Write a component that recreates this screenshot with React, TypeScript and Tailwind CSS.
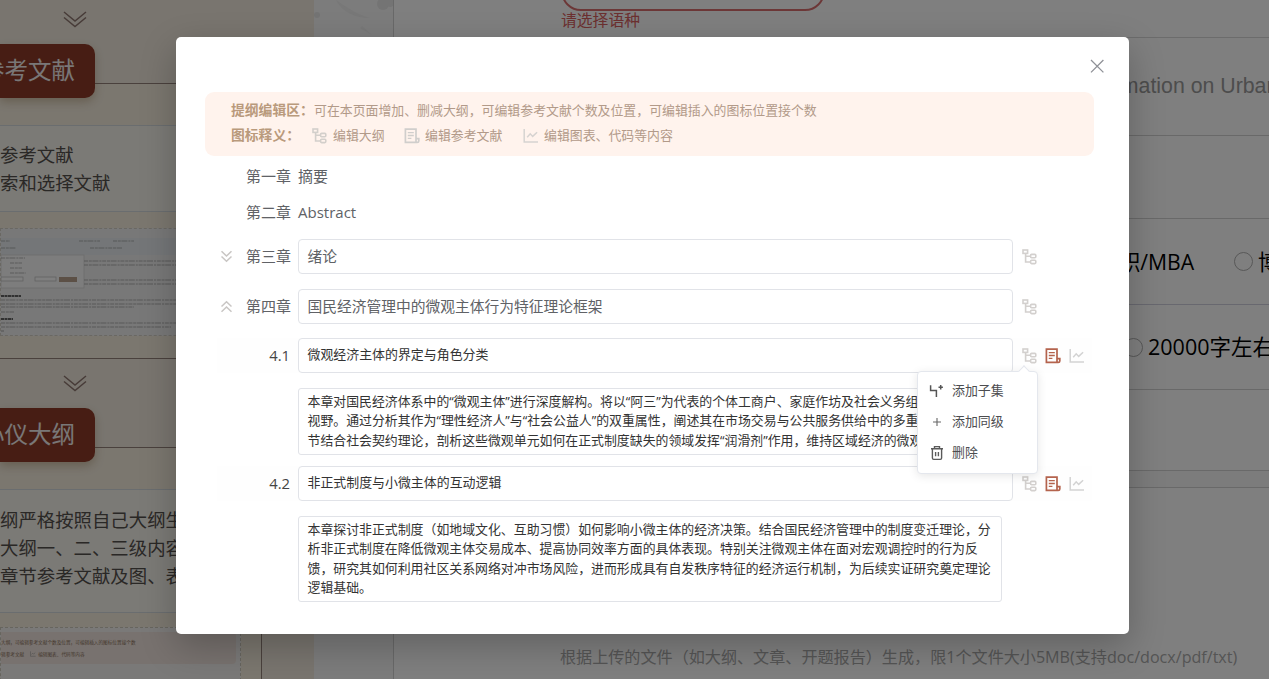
import React from "react";

const SANS = "font-['Open_Sans','Noto_Sans_CJK_SC',sans-serif]";

function DoubleChevron({ up = false, className = "" }: { up?: boolean; className?: string }) {
  return (
    <svg viewBox="0 0 12 12" className={className} fill="none" stroke="currentColor" strokeWidth="1.4">
      {up ? <path d="M1.4 6 6 1.6 10.6 6M1.4 10.8 6 6.4l4.6 4.4" /> : <path d="M1.4 1.2 6 5.6l4.6-4.4M1.4 6 6 10.4 10.6 6" />}
    </svg>
  );
}

function TreeIcon({ className = "text-[#d3d0ce]" }: { className?: string }) {
  return (
    <svg viewBox="0 0 15 16" className={"h-4 w-[15px] shrink-0 " + className} fill="none" stroke="currentColor" strokeWidth="1.6">
      <rect x="1" y="1" width="4.6" height="3.4" />
      <path d="M3.6 4.6v8.4h4.6M3.6 7.2h4.6" />
      <rect x="8.6" y="5.4" width="5.2" height="3.4" rx="1" />
      <rect x="8.6" y="11.2" width="5.2" height="3.4" rx="1" />
    </svg>
  );
}

function DocIcon({ className = "text-[#b4634d]" }: { className?: string }) {
  return (
    <svg viewBox="0 0 16 16" className={"h-4 w-4 shrink-0 " + className} fill="none" stroke="currentColor" strokeWidth="1.7">
      <path d="M12 10.4V1.2H1.4v13.2h11.8c1 0 1.6-.6 1.6-1.5v-2.3H12v3.6" />
      <path d="M3.8 4.6h6M3.8 7.5h6M3.8 10.4h3.6" strokeWidth="1.4" />
    </svg>
  );
}

function ChartIcon({ className = "text-[#d3d3d3]" }: { className?: string }) {
  return (
    <svg viewBox="0 0 16 16" className={"h-4 w-4 shrink-0 " + className} fill="none" stroke="currentColor" strokeWidth="1.5">
      <path d="M1.2 1v13H15M4.2 9.2l3-3.4 2.5 2.6 4.4-4.2" />
    </svg>
  );
}

function Squiggles({ rows }: { rows: [number, number, number][] }) {
  return (
    <>
      {rows.map(([x, y, w], i) => (
        <path key={i} d={`M${x} ${y}h${w}`} stroke="#888" strokeWidth="1.2" strokeDasharray="4 .8 3 .6 6 1 2 .8" opacity=".6" />
      ))}
    </>
  );
}

function ListPreview() {
  return (
    <div className="mt-4 h-[108px] w-[241px] border border-dashed border-[#d5d0c6] bg-[#f1f1f1]">
      <svg width="240" height="106" viewBox="0 0 240 106">
        <rect y="9" width="240" height="17" fill="#e9edf0" />
        <rect y="26" width="83" height="33" fill="#fbfbfb" stroke="#ddd" />
        <Squiggles
          rows={[
            [0, 12, 9], [78, 12, 21], [112, 12, 21], [0, 19, 15], [89, 19, 32], [0, 29, 24], [9, 34, 12], [9, 39, 12],
            [9, 44, 16], [83, 32, 100], [83, 36, 120], [83, 51, 130], [83, 55, 110], [0, 71, 180], [0, 75, 200],
            [0, 78, 133], [0, 83, 13], [0, 94, 210], [0, 98, 170], [0, 102, 3],
          ]}
        />
        <path d="M0 67h20M0 90h12" stroke="#333" strokeWidth="1.6" strokeDasharray="3 .5" />
        <rect y="48" width="22" height="4" fill="#fff" stroke="#bbb" strokeWidth=".7" />
        <rect x="34" y="48" width="21" height="4" fill="#fff" stroke="#bbb" strokeWidth=".7" />
        <rect x="58" y="48" width="18" height="5" fill="#b9a08c" />
      </svg>
    </div>
  );
}

function StepTitle({ children }: { children: string }) {
  return (
    <div className="-mt-[40px] flex h-[54px] w-[95px] items-center justify-end rounded-r-[10px] bg-[#8e3b28] pr-5 text-[23.5px] whitespace-nowrap text-[#f3eeee] shadow-[0_4px_10px_rgba(120,80,30,.3)]">
      {children}
    </div>
  );
}

function GuidePanel() {
  return (
    <aside className="flex h-full w-[314px] shrink-0 flex-col overflow-hidden bg-[#f2ebdf]">
      <div className="flex h-[83px] shrink-0 pt-[11px] pl-[63px]">
        <svg width="24" height="17" viewBox="0 0 24 17" fill="none" stroke="#8f7770" strokeWidth="1.5">
          <path d="M1 1l11 9L23 1M1 6.5l11 9 11-9" />
        </svg>
      </div>
      <section className="h-[276px] w-[262px] shrink-0 border-t border-r border-b border-[#95827a] bg-[#f6eedf]">
        <StepTitle>参考文献</StepTitle>
        <div className="mt-[27px] h-[87px] w-[241px] border-y border-[#d5dade] bg-[#f6f4ed] pt-[15px] text-[18.4px] leading-[28px] whitespace-nowrap text-[#55504c]">
          <p>参考文献</p>
          <p>索和选择文献</p>
        </div>
        <ListPreview />
      </section>
      <div className="flex h-[88px] shrink-0 pt-4 pl-[63px]">
        <svg width="24" height="17" viewBox="0 0 24 17" fill="none" stroke="#8f7770" strokeWidth="1.5">
          <path d="M1 1l11 9L23 1M1 6.5l11 9 11-9" />
        </svg>
      </div>
      <section className="h-[260px] w-[262px] shrink-0 border-t border-r border-[#95827a] bg-[#f6eedf]">
        <StepTitle>心仪大纲</StepTitle>
        <div className="mt-[27px] h-[124px] w-[241px] border-y border-[#d5dade] bg-[#f6f4ed] pt-[16px] text-[18.4px] leading-[28px] whitespace-nowrap text-[#55504c]">
          <p>纲严格按照自己大纲生成</p>
          <p>大纲一、二、三级内容，</p>
          <p>章节参考文献及图、表等</p>
        </div>
        <div className="mt-[14px] h-[80px] w-[241px] rounded-tr border border-dashed border-[#cfcabc] bg-[#f4f3f1] pt-[4px]">
          <div className="h-[32px] w-[235px] rounded-r-sm bg-[#f1e5de] pt-[4px] text-[4.65px] whitespace-nowrap text-[#8a715c]">
            <p className="leading-[12px]">大纲，可编辑参考文献个数及位置，可编辑插入的图标位置接个数</p>
            <p className="flex items-center leading-[12px]">
              辑参考文献
              <ChartIcon className="mr-0.5 ml-1.5 h-[6px]! w-[6px]! text-[#999]" />
              编辑图表、代码等内容
            </p>
          </div>
        </div>
      </section>
    </aside>
  );
}

function RequestForm() {
  return (
    <main className="flex h-full flex-1 flex-col overflow-hidden border-l border-[#d2d2d2]">
      <div className="h-[38px] shrink-0 border-b border-[#d9d9d9] pl-[167px]">
        <div className="-mt-[29px] h-10 w-[264px] rounded-[20px] border-2 border-[#d96f6f]" />
        <p className="-mt-px text-[15.8px] leading-[20px] text-[#d96161]">请选择语种</p>
      </div>
      <div className="flex h-[98px] shrink-0 items-center border-b border-[#d2d2d2] pl-[702px] font-['Liberation_Sans'] text-[21.3px] whitespace-nowrap text-[#9a9a9a]">
        <span>formation on Urban</span>
      </div>
      <div className="h-[83px] shrink-0 border-b border-[#d2d2d2]" />
      <div className="flex h-[86px] shrink-0 items-center border-b border-[#d0d0de] pl-[725px] text-[21.2px] whitespace-nowrap text-black">
        <span className="w-[115px] shrink-0">职/MBA</span>
        <span className="mr-[5px] size-[19px] shrink-0 rounded-full border border-[#b0b0b0]" />
        博士
      </div>
      <div className="flex h-[85px] shrink-0 items-center border-b border-[#d2d2d2] pl-[730px] text-[21.5px] whitespace-nowrap text-black">
        <span className="mr-[5px] size-[19px] shrink-0 rounded-full border border-[#b0b0b0]" />
        20000字左右
      </div>
      <div className="h-[81px] shrink-0 border-b border-[#d2d2d2]" />
      <div className="h-[17px] shrink-0 border-b border-[#d2d2d2] bg-[#f8f8f8]" />
      <p className="pt-[157px] pl-[166px] text-[16.1px] leading-[24px] whitespace-nowrap text-[#aaa]">
        根据上传的文件（如大纲、文章、开题报告）生成，限1个文件大小5MB(支持doc/docx/pdf/txt)
      </p>
    </main>
  );
}

function Field({ children, small = false }: { children: string; small?: boolean }) {
  return (
    <div
      className={
        "flex h-[35px] w-[715px] shrink-0 items-center rounded-[4px] border border-[#e1e3e8] bg-white pb-px pl-[8.5px] whitespace-nowrap " +
        (small ? "text-[12.93px] text-[#333]" : "text-[14.75px] text-[#606266]")
      }
    >
      {children}
    </div>
  );
}

function Chapter({ label, title, open = false }: { label: string; title: string; open?: boolean }) {
  return (
    <div className="flex items-center">
      <span className="flex w-[70px] pl-[44px]">
        <DoubleChevron up={open} className="h-[13px] w-[13px] text-[#c9c6c4]" />
      </span>
      <span className="w-[52px] pb-px text-[15px] whitespace-nowrap text-[#606266]">{label}</span>
      <Field>{title}</Field>
      <span className="ml-[9px]">
        <TreeIcon />
      </span>
    </div>
  );
}

function Section({ index, title }: { index: string; title: string }) {
  return (
    <div className="ml-[41px] flex w-[875px] items-center bg-[#fefefe]">
      <span className="w-[81px] pr-[8px] pb-px text-right text-[14.8px] text-[#444]">{index}</span>
      <Field small>{title}</Field>
      <span className="ml-[9px] flex gap-[8px]">
        <TreeIcon />
        <DocIcon />
        <ChartIcon />
      </span>
    </div>
  );
}

function Summary({ lines, className }: { lines: string[]; className: string }) {
  return (
    <div className={"ml-[122px] w-[704px] overflow-hidden rounded-[3px] border border-[#e1e3e8] pl-[8.5px] text-[12.9px] leading-[19.3px] whitespace-pre text-[#333] " + className}>
      {lines.map((line) => (
        <p key={line}>{line}</p>
      ))}
    </div>
  );
}

function ActionMenu() {
  return (
    <div className="absolute top-[334px] left-[741px] flex h-[103px] w-[121px] flex-col rounded-[4px] border border-[#e4e7ed] bg-white pt-[3px] text-[12.93px] text-[#4c4d50] shadow-[0_2px_10px_rgba(0,0,0,.1)]">
      <span className="absolute -top-[5px] left-[102px] size-[8px] rotate-45 border-t border-l border-[#e4e7ed] bg-white" />
      <div className="flex h-[31px] items-center pl-[11px]">
        <svg width="16" height="16" viewBox="0 0 16 16" fill="none" stroke="#555" strokeWidth="1.5">
          <path d="M1.6 2.2v5.2h5.8V14M11.7 2v4.4M9.5 4.2h4.4" />
        </svg>
        <span className="ml-[7px]">添加子集</span>
      </div>
      <div className="flex h-[31px] items-center pl-[11px]">
        <svg width="16" height="16" viewBox="0 0 16 16" fill="none" stroke="#666" strokeWidth="1.1">
          <path d="M8 4v8M4 8h8" />
        </svg>
        <span className="ml-[7px]">添加同级</span>
      </div>
      <div className="flex h-[31px] items-center pl-[11px]">
        <svg width="16" height="16" viewBox="0 0 16 16" fill="none" stroke="#5a5a5a" strokeWidth="1.4">
          <path d="M2 3.8h12M5.5 3.6V1.6h5v2M3.4 4v9c0 .8.5 1.4 1.3 1.4h6.6c.8 0 1.3-.6 1.3-1.4V4M6.6 7v4.3M9.4 7v4.3" />
        </svg>
        <span className="ml-[7px]">删除</span>
      </div>
    </div>
  );
}

function OutlineDialog() {
  return (
    <div className="relative h-[597px] w-[953px] rounded-[5px] bg-white shadow-[0_12px_36px_rgba(0,0,0,.24)]">
      <div className="flex h-[55px] justify-end pt-[22px] pr-[25px]">
        <svg width="14" height="14" viewBox="0 0 14 14" stroke="#8f9197" strokeWidth="1.3">
          <path d="M1 1l12.4 12.4M13.4 1 1 13.4" />
        </svg>
      </div>
      <div className="ml-[29px] h-[64px] w-[889px] rounded-[9px] bg-[#fff3ed] pt-[6px] pl-[26px] text-[12.9px] whitespace-nowrap text-[#b29a89]">
        <p className="flex h-[25px] items-center">
          <b className="w-[83px] shrink-0 text-[13.8px] text-[#b99a7c]">提纲编辑区：</b>
          可在本页面增加、删减大纲，可编辑参考文献个数及位置，可编辑插入的图标位置接个数
        </p>
        <p className="flex h-[25px] items-center">
          <b className="w-[81px] shrink-0 text-[13.8px] text-[#b99a7c]">图标释义：</b>
          <TreeIcon className="text-[#d3cfcb]" />
          <span className="ml-[6px] w-[71px]">编辑大纲</span>
          <DocIcon className="text-[#d0cecc]" />
          <span className="ml-[5px] w-[98px]">编辑参考文献</span>
          <ChartIcon className="text-[#d6d3d1]" />
          <span className="ml-[5px]">编辑图表、代码等内容</span>
        </p>
      </div>
      <div className="mt-[2px] ml-[70px] flex h-[36px] items-center gap-[7px] text-[15px] text-[#606266]">
        <span>第一章</span>
        <span>摘要</span>
      </div>
      <div className="ml-[70px] flex h-[36px] items-center gap-[7px] text-[15px] text-[#606266]">
        <span>第二章</span>
        <span>Abstract</span>
      </div>
      <div className="mt-[9px]">
        <Chapter label="第三章" title="绪论" />
      </div>
      <div className="mt-[15px]">
        <Chapter label="第四章" title="国民经济管理中的微观主体行为特征理论框架" open />
      </div>
      <div className="mt-[14px]">
        <Section index="4.1" title="微观经济主体的界定与角色分类" />
      </div>
      <Summary
        className="mt-[15px] h-[67px] pt-[3px]"
        lines={[
          "本章对国民经济体系中的“微观主体”进行深度解构。将以“阿三”为代表的个体工商户、家庭作坊及社会义务组织纳入研究",
          "视野。通过分析其作为“理性经济人”与“社会公益人”的双重属性，阐述其在市场交易与公共服务供给中的多重角色。本",
          "节结合社会契约理论，剖析这些微观单元如何在正式制度缺失的领域发挥“润滑剂”作用，维持区域经济的微观平衡。",
        ]}
      />
      <div className="mt-[11px]">
        <Section index="4.2" title="非正式制度与小微主体的互动逻辑" />
      </div>
      <Summary
        className="mt-[15px] h-[86px] pt-[3px]"
        lines={[
          "本章探讨非正式制度（如地域文化、互助习惯）如何影响小微主体的经济决策。结合国民经济管理中的制度变迁理论，分",
          "析非正式制度在降低微观主体交易成本、提高协同效率方面的具体表现。特别关注微观主体在面对宏观调控时的行为反",
          "馈，研究其如何利用社区关系网络对冲市场风险，进而形成具有自发秩序特征的经济运行机制，为后续实证研究奠定理论",
          "逻辑基础。",
        ]}
      />
      <ActionMenu />
    </div>
  );
}

export default function App() {
  return (
    <div className={"relative h-[679px] w-[1269px] overflow-hidden bg-white " + SANS}>
      <div className="flex h-full w-full">
        <GuidePanel />
        <div className="w-[79px] shrink-0 bg-[#f8f8f8]">
          <svg width="79" height="60" viewBox="0 0 79 60" fill="#e8e8e8">
            <circle cx="69" cy="4" r="6" />
            <circle cx="76" cy="2" r="5" />
            <circle cx="3" cy="15" r="3" />
            <path d="M22 0c12 8 20 14 34 18-14 0-28-6-34-18zM48 26l10 9-12-7z" opacity=".5" />
          </svg>
        </div>
        <RequestForm />
      </div>
      <div className="absolute inset-0 bg-black/50 pt-[37px] pl-[176px]">
        <OutlineDialog />
      </div>
    </div>
  );
}
